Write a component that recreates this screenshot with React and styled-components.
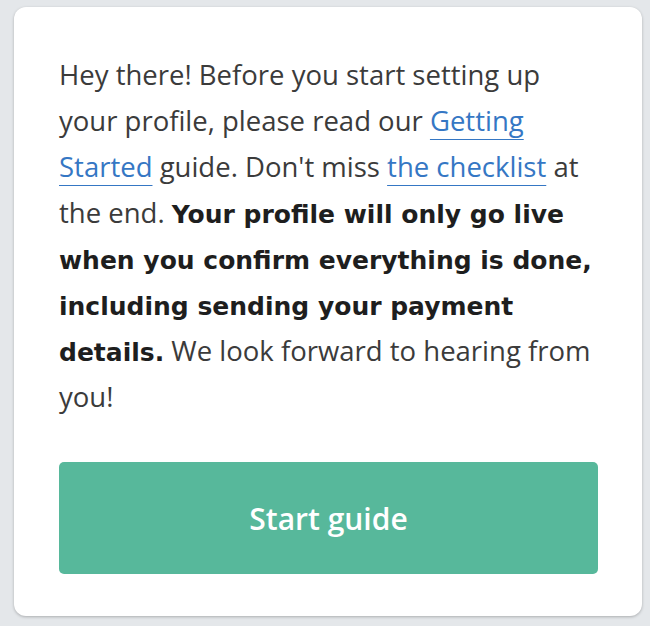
import styled, { createGlobalStyle } from "styled-components";

const GlobalStyle = createGlobalStyle`
  html, body {
    margin: 0;
    padding: 0;
    background: #e4e7ea;
  }
`;

const Page = styled.div`
  padding: 7px 8px 10px 14px;
`;

const Card = styled.div`
  box-sizing: border-box;
  width: 628px;
  background: #ffffff;
  border-radius: 12px;
  box-shadow: 0 1px 3px rgba(0, 0, 0, 0.25);
  padding: 45px 44px 42px 45px;
  display: flex;
  flex-direction: column;
  gap: 42px;
`;

const Message = styled.p`
  margin: 0;
  font-family: "Open Sans", sans-serif;
  font-size: 27.5px;
  line-height: 46px;
  color: #3b3b3b;
`;

const Link = styled.a`
  color: #3577c4;
  text-decoration: underline;
  text-decoration-color: #3577c4;
  text-underline-offset: 8px;
  text-decoration-thickness: 1px;
`;

const Strong = styled.b`
  font-family: "DejaVu Sans", sans-serif;
  font-weight: bold;
  font-size: 25px;
  line-height: 1;
  color: #1e1e1e;
`;

const Button = styled.button`
  height: 112px;
  border: none;
  border-radius: 5px;
  background: #57b89b;
  color: #ffffff;
  font-family: "Open Sans", sans-serif;
  font-weight: 600;
  font-size: 30px;
  cursor: pointer;
`;

export default function App() {
  return (
    <>
      <GlobalStyle />
      <Page>
        <Card>
          <Message>
            Hey there! Before you start setting up your profile, please read our{" "}
            <Link href="#">Getting Started</Link> guide. Don't miss{" "}
            <Link href="#">the checklist</Link> at the end.{" "}
            <Strong>
              Your profile will only go live when you confirm everything is done,
              including sending your payment details.
            </Strong>{" "}
            We look forward to hearing from you!
          </Message>
          <Button>Start guide</Button>
        </Card>
      </Page>
    </>
  );
}
